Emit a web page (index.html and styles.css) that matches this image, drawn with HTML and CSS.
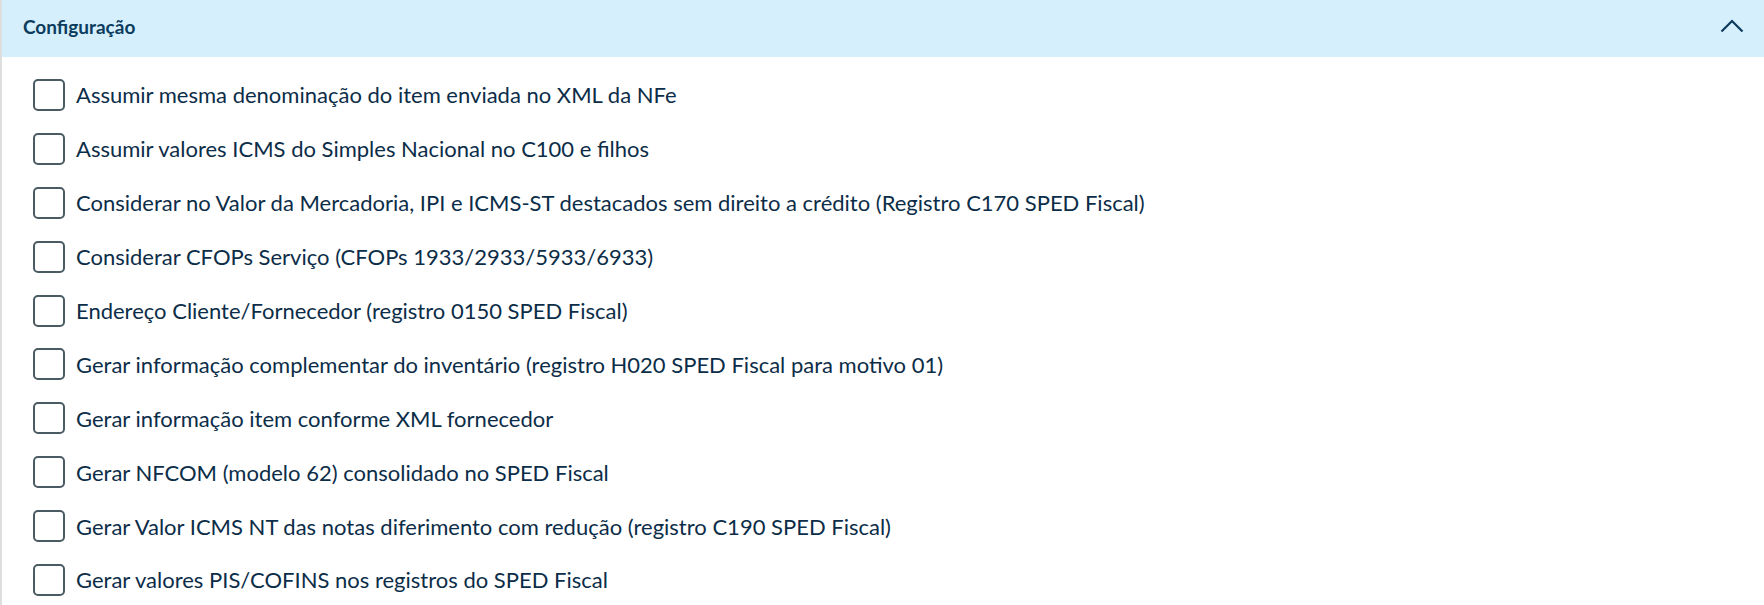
FILE: index.html
```html
<!DOCTYPE html>
<html lang="pt-BR">
<head>
<meta charset="utf-8">
<title>Configuração</title>
<link rel="stylesheet" href="styles.css">
</head>
<body>
<section class="panel">
  <header class="panel-header">
    <span class="panel-title">Configuração</span>
    <svg class="chevron" width="24" height="14" viewBox="0 0 24 14" aria-hidden="true">
      <polyline points="1.5,12.5 12,2 22.5,12.5" fill="none" stroke="#0c3b5e" stroke-width="2.2"/>
    </svg>
  </header>
  <div class="panel-body">
    <label class="row"><span class="box"></span><span class="label">Assumir mesma denominação do item enviada no XML da NFe</span></label>
    <label class="row"><span class="box"></span><span class="label">Assumir valores ICMS do Simples Nacional no C100 e filhos</span></label>
    <label class="row"><span class="box"></span><span class="label">Considerar no Valor da Mercadoria, IPI e ICMS-ST destacados sem direito a crédito (Registro C170 SPED Fiscal)</span></label>
    <label class="row"><span class="box"></span><span class="label">Considerar CFOPs Serviço (CFOPs 1933/2933/5933/6933)</span></label>
    <label class="row"><span class="box"></span><span class="label">Endereço Cliente/Fornecedor (registro 0150 SPED Fiscal)</span></label>
    <label class="row"><span class="box"></span><span class="label">Gerar informação complementar do inventário (registro H020 SPED Fiscal para motivo 01)</span></label>
    <label class="row"><span class="box"></span><span class="label">Gerar informação item conforme XML fornecedor</span></label>
    <label class="row"><span class="box"></span><span class="label">Gerar NFCOM (modelo 62) consolidado no SPED Fiscal</span></label>
    <label class="row"><span class="box"></span><span class="label">Gerar Valor ICMS NT das notas diferimento com redução (registro C190 SPED Fiscal)</span></label>
    <label class="row"><span class="box"></span><span class="label">Gerar valores PIS/COFINS nos registros do SPED Fiscal</span></label>
  </div>
</section>
</body>
</html>
```
FILE: styles.css
```css
html, body {
  margin: 0;
  padding: 0;
  background: #ffffff;
  overflow: hidden;
}
body {
  font-family: Lato, "Noto Sans", "Liberation Sans", sans-serif;
  color: #0c2d48;
}
.panel {
  border-left: 2px solid #dedede;
  min-height: 605px;
  box-sizing: border-box;
}
.panel-header {
  height: 57px;
  background: #d6effc;
  display: flex;
  align-items: center;
  justify-content: space-between;
  padding: 0 20px 0 21px;
  box-sizing: border-box;
}
.panel-title {
  font-size: 19px;
  font-weight: 700;
  color: #0b3c5e;
  margin-top: -4px;
}
.chevron {
  display: block;
  margin-top: -6px;
}
.panel-body {
  padding: 11px 0 0 31px;
  display: flex;
  flex-direction: column;
}
.row {
  display: flex;
  align-items: center;
  height: 53.9px;
  gap: 11px;
}
.box {
  width: 32px;
  height: 32px;
  box-sizing: border-box;
  border: 2px solid #4b5b64;
  border-radius: 5px;
  flex: none;
}
.label {
  font-size: 22px;
  color: #0c2d48;
}
```
